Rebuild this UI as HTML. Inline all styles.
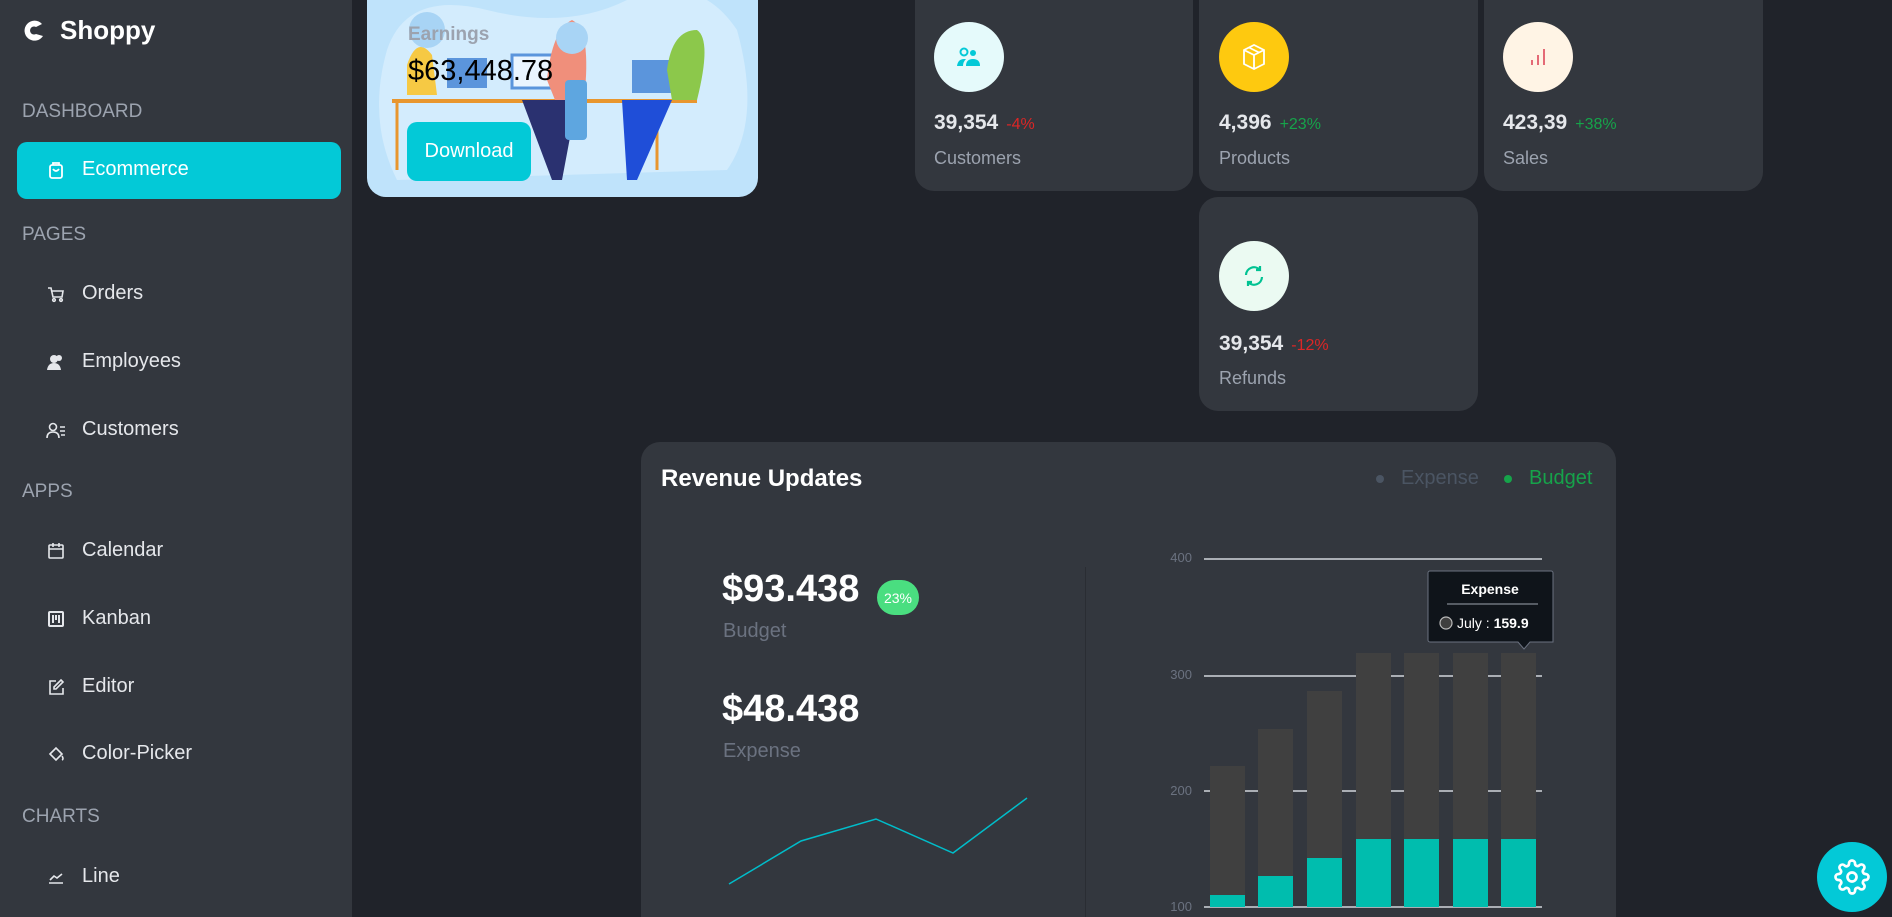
<!DOCTYPE html>
<html><head><meta charset="utf-8"><style>
*{margin:0;padding:0;box-sizing:border-box}
html{width:1892px;height:917px;overflow:hidden}
body{width:1892px;height:917px;overflow:hidden;background:#20232a;font-family:"Liberation Sans",sans-serif;position:relative}
.a{position:absolute}
#side{left:0;top:0;width:352px;height:917px;background:#33373e}
.sec{position:absolute;left:22px;color:#9ca3af;font-size:19px}
.item{position:absolute;left:46px;color:#e5e7eb;font-size:20px;display:flex;align-items:center}
.item svg{width:20px;height:20px;margin-right:16px}
.card{position:absolute;background:#33373e;border-radius:19px}
.circ{position:absolute;width:70px;height:70px;border-radius:50%;display:flex;align-items:center;justify-content:center}
.num{position:absolute;color:#e5e7eb;font-size:21px;font-weight:bold}
.num span{font-size:16px;font-weight:normal;margin-left:8px}
.lbl{position:absolute;color:#9ca3af;font-size:18px}
</style></head><body>
<div id="side" class="a">
 <div class="a" style="left:22px;top:15px;display:flex;align-items:center;color:#fff;font-weight:bold;font-size:26px">
  <svg width="24" height="26" viewBox="0 0 24 26"><path d="M20 6 A10 10 0 1 0 21 18 L14 16 A4 4 0 1 1 14 9 Z" fill="#fff"/></svg><span style="margin-left:14px">Shoppy</span></div>
 <div class="sec" style="top:101px">DASHBOARD</div>
 <div class="a" style="left:17px;top:142px;width:324px;height:57px;background:#03c9d7;border-radius:10px"></div>
 <div class="item" style="top:158px;color:#fff"><svg viewBox="0 0 20 20" fill="none" stroke="#fff" stroke-width="1.8"><rect x="4" y="5" width="12" height="13" rx="2"/><path d="M7 5V3h6v2M7 9q3 4 6 0"/></svg>Ecommerce</div>
 <div class="sec" style="top:224px">PAGES</div>
 <div class="item" style="top:282px"><svg viewBox="0 0 20 20" fill="none" stroke="#e5e7eb" stroke-width="1.6"><path d="M2 4h3l2 9h9l1-6H6"/><circle cx="8" cy="16" r="1.3"/><circle cx="15" cy="16" r="1.3"/></svg>Orders</div>
 <div class="item" style="top:350px"><svg viewBox="0 0 20 20" fill="#e5e7eb"><circle cx="8" cy="7" r="4"/><circle cx="13" cy="6" r="3"/><path d="M1 18q1-7 7-7t7 7z"/></svg>Employees</div>
 <div class="item" style="top:418px"><svg viewBox="0 0 20 20" fill="none" stroke="#e5e7eb" stroke-width="1.6"><circle cx="7" cy="7" r="3.5"/><path d="M1 18q0-6 6-6t6 6M14 7h5M14 11h5M15 15h4"/></svg>Customers</div>
 <div class="sec" style="top:481px">APPS</div>
 <div class="item" style="top:539px"><svg viewBox="0 0 20 20" fill="none" stroke="#e5e7eb" stroke-width="1.6"><rect x="3" y="4" width="14" height="13" rx="1"/><path d="M3 8h14M7 2v4M13 2v4"/></svg>Calendar</div>
 <div class="item" style="top:607px"><svg viewBox="0 0 20 20" fill="none" stroke="#e5e7eb" stroke-width="2"><rect x="3" y="3" width="14" height="14" rx="1"/><path d="M7 6v8M10 6v5M13 6v8"/></svg>Kanban</div>
 <div class="item" style="top:675px"><svg viewBox="0 0 20 20" fill="none" stroke="#e5e7eb" stroke-width="1.6"><path d="M10 4H4v13h13v-6M15 3l2 2-7 7H8v-2z"/></svg>Editor</div>
 <div class="item" style="top:742px"><svg viewBox="0 0 20 20" fill="none" stroke="#e5e7eb" stroke-width="1.6"><path d="M4 10l6-6 6 6-6 6zM16 12q2 3 0 4"/></svg>Color-Picker</div>
 <div class="sec" style="top:806px">CHARTS</div>
 <div class="item" style="top:865px"><svg viewBox="0 0 20 20" fill="none" stroke="#e5e7eb" stroke-width="1.6"><path d="M3 16h14M4 13l4-4 3 2 5-4"/></svg>Line</div>
</div>

<!-- earnings -->
<div class="a" style="left:367px;top:-30px;width:391px;height:227px;border-radius:19px;background:#bfe3fb;overflow:hidden">
 <svg class="a" style="left:0;top:0" width="391" height="227">
  <path d="M20 80 Q40 20 120 40 Q200 60 260 30 Q330 0 370 60 Q395 150 360 200 L30 210 Q0 150 20 80Z" fill="#d3ecfd"/>
  <line x1="25" y1="131" x2="330" y2="131" stroke="#e8962e" stroke-width="4"/>
  <line x1="30" y1="131" x2="30" y2="200" stroke="#e8962e" stroke-width="3"/>
  <line x1="290" y1="131" x2="290" y2="200" stroke="#e8962e" stroke-width="3"/>
  <rect x="80" y="88" width="40" height="30" fill="#5b95dc"/>
  <rect x="145" y="85" width="45" height="33" fill="#eaf5ff" stroke="#5b95dc" stroke-width="3"/>
  <rect x="265" y="90" width="45" height="33" fill="#5b95dc"/>
  <path d="M40 95 q10-30 25-10 l5 40 h-30z" fill="#f6c944"/>
  <path d="M180 110 q5-50 25-60 q20 10 12 80 l-25 10z" fill="#f08f7b"/>
  <path d="M155 130 h55 l-15 80 h-10z" fill="#2a3170"/>
  <path d="M300 100 q5-40 30-40 q15 10 0 70h-25z" fill="#8cc84b"/>
  <path d="M255 130 h50 l-35 80 h-10z" fill="#1f4ed8"/>
  <rect x="198" y="110" width="22" height="60" rx="4" fill="#5ea6e0"/>
  <circle cx="60" cy="60" r="18" fill="#a8d4f5"/>
  <circle cx="205" cy="68" r="16" fill="#a8d4f5"/>
 </svg>
 <div class="a" style="left:41px;top:54px;font-size:19px;font-weight:bold;color:#9ca3af">Earnings</div>
 <div class="a" style="left:41px;top:85px;font-size:29px;color:#000">$63,448.78</div>
 <div class="a" style="left:40px;top:152px;width:124px;height:59px;border-radius:10px;background:#03c9d7;color:#fff;font-size:20px;display:flex;align-items:center;justify-content:center">Download</div>
</div>

<!-- stat cards -->
<div class="card" style="left:915px;top:-30px;width:278px;height:221px"></div>
<div class="card" style="left:1199px;top:-30px;width:279px;height:221px"></div>
<div class="card" style="left:1484px;top:-30px;width:279px;height:221px"></div>
<div class="card" style="left:1199px;top:197px;width:279px;height:214px"></div>

<div class="circ" style="left:934px;top:22px;background:#e5fafb"><svg width="26" height="22" viewBox="0 0 26 22" fill="#03c9d7"><circle cx="8" cy="6" r="3.5" fill="none" stroke="#03c9d7" stroke-width="2"/><circle cx="17" cy="7" r="3"/><path d="M1 20q1-7 7-7h2q-3 3-3 7zM10 20q0-7 7-7t7 7z"/></svg></div>
<div class="num" style="left:934px;top:111px">39,354<span style="color:#dc2626">-4%</span></div>
<div class="lbl" style="left:934px;top:148px">Customers</div>

<div class="circ" style="left:1219px;top:22px;background:#fec90f"><svg width="28" height="30" viewBox="0 0 28 30" fill="none" stroke="#fff" stroke-width="1.8"><path d="M4 8 L14 3 L24 8 V22 L14 27 L4 22Z M4 8 L14 13 L24 8 M14 13 V27 M9 5.5 L19 10.5"/></svg></div>
<div class="num" style="left:1219px;top:111px">4,396<span style="color:#16a34a">+23%</span></div>
<div class="lbl" style="left:1219px;top:148px">Products</div>

<div class="circ" style="left:1503px;top:22px;background:#fff4e5"><svg width="24" height="24" viewBox="0 0 24 24" stroke="#e46a76" stroke-width="2"><path d="M6 20v-5M12 20v-10M18 20V4"/></svg></div>
<div class="num" style="left:1503px;top:111px">423,39<span style="color:#16a34a">+38%</span></div>
<div class="lbl" style="left:1503px;top:148px">Sales</div>

<div class="circ" style="left:1219px;top:241px;background:#ebfaf2"><svg width="26" height="26" viewBox="0 0 26 26" fill="none" stroke="#00c292" stroke-width="2.2"><path d="M5 12a8 8 0 0 1 14-5M21 14a8 8 0 0 1-14 5M19 3v4h-4M7 23v-4h4"/></svg></div>
<div class="num" style="left:1219px;top:332px">39,354<span style="color:#dc2626">-12%</span></div>
<div class="lbl" style="left:1219px;top:368px">Refunds</div>

<!-- revenue -->
<div class="card" style="left:641px;top:442px;width:975px;height:475px;border-radius:19px 19px 0 0"></div>
<div class="a" style="left:661px;top:465px;color:#fff;font-size:24px;font-weight:bold">Revenue Updates</div>
<div class="a" style="left:1376px;top:475px;width:8px;height:8px;border-radius:50%;background:#4b5563"></div>
<div class="a" style="left:1401px;top:467px;color:#4b5563;font-size:20px">Expense</div>
<div class="a" style="left:1504px;top:475px;width:8px;height:8px;border-radius:50%;background:#16a34a"></div>
<div class="a" style="left:1529px;top:467px;color:#16a34a;font-size:20px">Budget</div>

<div class="a" style="left:722px;top:568px;color:#fff;font-size:38px;font-weight:bold">$93.438</div>
<div class="a" style="left:877px;top:580px;width:42px;height:35px;border-radius:18px;background:#4ade80;color:#fff;font-size:14px;display:flex;align-items:center;justify-content:center">23%</div>
<div class="a" style="left:723px;top:620px;color:#6b7280;font-size:20px">Budget</div>
<div class="a" style="left:722px;top:688px;color:#fff;font-size:38px;font-weight:bold">$48.438</div>
<div class="a" style="left:723px;top:740px;color:#6b7280;font-size:20px">Expense</div>
<div class="a" style="left:1085px;top:567px;width:1px;height:350px;background:#2a2d33"></div>
<svg class="a" style="left:0;top:0" width="1892" height="917">
 <polyline points="729,884 801,841 876,819 953,853 1027,798" fill="none" stroke="#00bdca" stroke-width="1.5"/>
 <g stroke="#d1d5db" stroke-width="1.5"><line x1="1204" y1="559" x2="1542" y2="559"/><line x1="1204" y1="676" x2="1542" y2="676"/><line x1="1204" y1="791" x2="1542" y2="791"/><line x1="1204" y1="907" x2="1542" y2="907"/></g>
 <g fill="#6b7280" font-size="13" font-family="Liberation Sans" text-anchor="end"><text x="1192" y="562">400</text><text x="1192" y="679">300</text><text x="1192" y="795">200</text><text x="1192" y="911">100</text></g>
 <g fill="#404040"><rect x="1210" y="766" width="35" height="141"/><rect x="1258" y="729" width="35" height="178"/><rect x="1307" y="691" width="35" height="216"/><rect x="1356" y="653" width="35" height="254"/><rect x="1404" y="653" width="35" height="254"/><rect x="1453" y="653" width="35" height="254"/><rect x="1501" y="653" width="35" height="254"/></g>
 <g fill="#00bdae"><rect x="1210" y="895" width="35" height="12"/><rect x="1258" y="876" width="35" height="31"/><rect x="1307" y="858" width="35" height="49"/><rect x="1356" y="839" width="35" height="68"/><rect x="1404" y="839" width="35" height="68"/><rect x="1453" y="839" width="35" height="68"/><rect x="1501" y="839" width="35" height="68"/></g>
 <path d="M1430 571 h121 a2 2 0 0 1 2 2 v69 h-23 l-6 7 l-6-7 h-88 a2 2 0 0 1-2-2 v-67 a2 2 0 0 1 2-2z" fill="#0f141a" stroke="#6b7280" stroke-width="1"/>
 <text x="1490" y="594" fill="#fff" font-size="14" font-weight="bold" text-anchor="middle" font-family="Liberation Sans">Expense</text>
 <line x1="1447" y1="604" x2="1538" y2="604" stroke="#9ca3af"/>
 <circle cx="1446" cy="623" r="6" fill="#3f3f3f" stroke="#bbb" stroke-width="1.2"/>
 <text x="1457" y="628" fill="#fff" font-size="14" font-family="Liberation Sans">July : <tspan font-weight="bold">159.9</tspan></text>
</svg>

<div class="a" style="left:1817px;top:842px;width:70px;height:70px;border-radius:50%;background:#03c9d7;display:flex;align-items:center;justify-content:center">
 <svg width="36" height="36" viewBox="0 0 24 24" fill="none" stroke="#fff" stroke-width="1.8"><circle cx="12" cy="12" r="3"/><path d="M19.4 15a1.65 1.65 0 0 0 .33 1.820l.06.06a2 2 0 1 1-2.83 2.83l-.06-.06a1.65 1.65 0 0 0-1.82-.33 1.65 1.65 0 0 0-1 1.51V21a2 2 0 1 1-4 0v-.09A1.65 1.65 0 0 0 9 19.4a1.65 1.65 0 0 0-1.82.33l-.06.06a2 2 0 1 1-2.83-2.83l.06-.06A1.65 1.65 0 0 0 4.68 15a1.65 1.65 0 0 0-1.510-1H3a2 2 0 1 1 0-4h.09A1.65 1.65 0 0 0 4.6 9a1.65 1.65 0 0 0-.33-1.82l-.06-.06a2 2 0 1 1 2.830-2.83l.06.06A1.65 1.65 0 0 0 9 4.68 1.65 1.65 0 0 0 10 3.17V3a2 2 0 1 1 4 0v.09a1.65 1.65 0 0 0 1 1.51 1.65 1.65 0 0 0 1.82-.33l.06-.06a2 2 0 1 1 2.83 2.83l-.06.06A1.65 1.65 0 0 0 19.4 9a1.65 1.65 0 0 0 1.51 1H21a2 2 0 1 1 0 4h-.09a1.65 1.65 0 0 0-1.51 1z"/></svg>
</div>
</body></html>
